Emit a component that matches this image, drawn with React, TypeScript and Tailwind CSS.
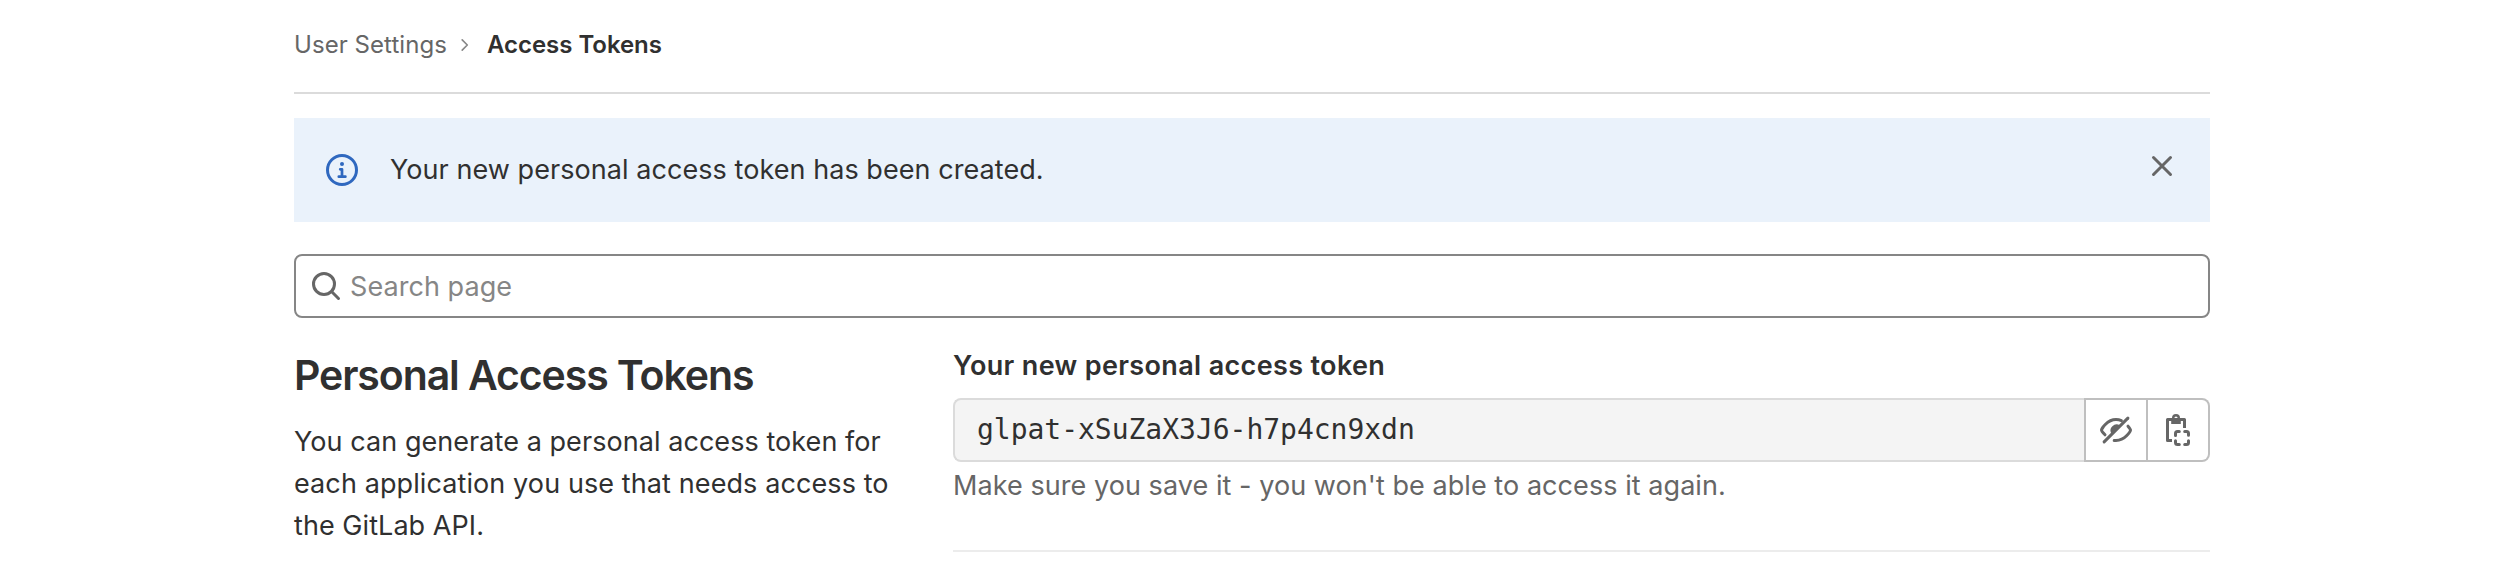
import React from 'react';

type IconProps = { className?: string };

function InfoIcon({ className }: IconProps) {
  return (
    <svg viewBox="0 0 16 16" className={className} fill="none" stroke="currentColor" strokeWidth="1.5" strokeLinecap="round" strokeLinejoin="round">
      <circle cx="8" cy="8" r="7.25" />
      <path d="M7.1 7.65H8v3.7M6.4 11.35h3.3" strokeWidth="1.35" />
      <circle cx="8" cy="5" r="1" fill="currentColor" stroke="none" />
    </svg>
  );
}

function CloseIcon({ className }: IconProps) {
  return (
    <svg viewBox="0 0 16 16" className={className} fill="none" stroke="currentColor" strokeWidth="1.5" strokeLinecap="round">
      <path d="M3.75 3.75l8.5 8.5M12.25 3.75l-8.5 8.5" />
    </svg>
  );
}

function SearchIcon({ className }: IconProps) {
  return (
    <svg viewBox="0 0 16 16" className={className} fill="none" stroke="currentColor" strokeWidth="1.5" strokeLinecap="round">
      <circle cx="7" cy="7" r="5.25" />
      <path d="M10.9 10.9l3.35 3.35" />
    </svg>
  );
}

function ChevronIcon({ className }: IconProps) {
  return (
    <svg viewBox="0 0 8 12" className={className} fill="none" stroke="currentColor" strokeWidth="1.6" strokeLinecap="round" strokeLinejoin="round">
      <path d="M1.2 0.9L6.3 6L1.2 11.1" />
    </svg>
  );
}

function EyeSlashIcon({ className }: IconProps) {
  return (
    <svg viewBox="0 0 16 16" className={className} fill="none" stroke="currentColor" strokeWidth="1.5" strokeLinecap="round" strokeLinejoin="round">
      <path d="M2.05 13.95l11.9-11.9" />
      <path d="M2.5 10.4C1.4 9.3.75 8.3.75 8S3.4 2.75 8 2.75c1 0 1.9.2 2.7.55" />
      <path d="M14 6.1c.8.95 1.25 1.7 1.25 1.9 0 .4-2.5 5.250-7.250 5.250-.3 0-.6 0-.9-.05" />
      <path d="M10.1 5.9a3 3 0 0 0-4.200 4.200z" fill="currentColor" stroke="none" />
    </svg>
  );
}

function PasteIcon({ className }: IconProps) {
  return (
    <svg viewBox="0 0 16 16" className={className} fill="none" stroke="currentColor" strokeWidth="1.5" strokeLinejoin="round">
      <path d="M5 13.25H2.75V2.75h8.5V7" />
      <path fillRule="evenodd" clipRule="evenodd" fill="currentColor" stroke="none" d="M5 2a2 2 0 1 1 4 0h.4v3H4.6V2zM7 1.25a.8.8 0 1 0 0 1.6.8.8 0 0 0 0-1.6z" />
      <path strokeLinecap="round" d="M6.75 10.7V9.75a1 1 0 0 1 1-1h.9M11.35 8.75h.9a1 1 0 0 1 1 1v.9M13.25 13.35v.9a1 1 0 0 1-1 1h-.9M8.65 15.25h-.9a1 1 0 0 1-1-1v-.9" />
    </svg>
  );
}

export default function App() {
  return (
    <div className="h-[582px] w-full overflow-hidden bg-white font-['Inter',sans-serif] text-[27px] leading-[42px] tracking-[0.06px] text-[#303030]">
      <div className="mx-auto w-[1916px]">
        <nav className="flex h-[94px] items-center border-b-2 border-[#dbdbdb] pb-[2px] text-[24px]">
          <span className="w-[167px] text-[#666]">User Settings</span>
          <ChevronIcon className="h-[12px] w-[8px] text-[#868686]" />
          <span className="ml-[18px] font-semibold tracking-[-0.04px]">Access Tokens</span>
        </nav>

        <div className="mt-[24px] flex h-[104px] items-center bg-[#eaf2fb] px-[32px]">
          <InfoIcon className="size-[32px] text-[#2f68bf]" />
          <p className="ml-[32px] flex-1">Your new personal access token has been created.</p>
          <CloseIcon className="mb-[8px] size-[32px] text-[#666]" />
        </div>

        <div className="mt-[32px] flex h-[64px] items-center rounded-[8px] border-2 border-[#868686] pl-[14px]">
          <SearchIcon className="size-[32px] text-[#666]" />
          <span className="ml-[8px] pt-[2px] text-[#868686]">Search page</span>
        </div>

        <div className="flex pt-[24px]">
          <section className="w-[659px] pt-[6px]">
            <h4 className="text-[41px] font-semibold leading-[54px] tracking-[-1.1px]">Personal Access Tokens</h4>
            <p className="pt-[19px]">
              <span className="block">You can generate a personal access token for</span>
              <span className="block tracking-[0.1px]">each application you use that needs access to</span>
              <span className="block">the GitLab API.</span>
            </p>
          </section>
          <section className="flex-1">
            <div className="h-[56px] pt-[3px] font-semibold tracking-[0.35px]">Your new personal access token</div>
            <div className="flex h-[64px]">
              <div className="flex flex-1 items-center rounded-l-[8px] border-2 border-r-0 border-[#dbdbdb] bg-[#f4f4f4] pl-[22px] font-['DejaVu_Sans_Mono',monospace] text-[28px] tracking-[-0.02px]">glpat-xSuZaX3J6-h7p4cn9xdn</div>
              <button className="flex w-[64px] items-center border-2 border-[#bfbfbf] pl-[14px]">
                <EyeSlashIcon className="size-[32px] text-[#666]" />
              </button>
              <button className="flex w-[62px] items-center rounded-r-[8px] border-2 border-l-0 border-[#bfbfbf] pl-[14px]">
                <PasteIcon className="size-[32px] text-[#666]" />
              </button>
            </div>
            <p className="h-[88px] pt-[3px] text-[#666]">Make sure you save it - you won't be able to access it again.</p>
            <hr className="border-t-2 border-[#ececec]" />
          </section>
        </div>
      </div>
    </div>
  );
}
